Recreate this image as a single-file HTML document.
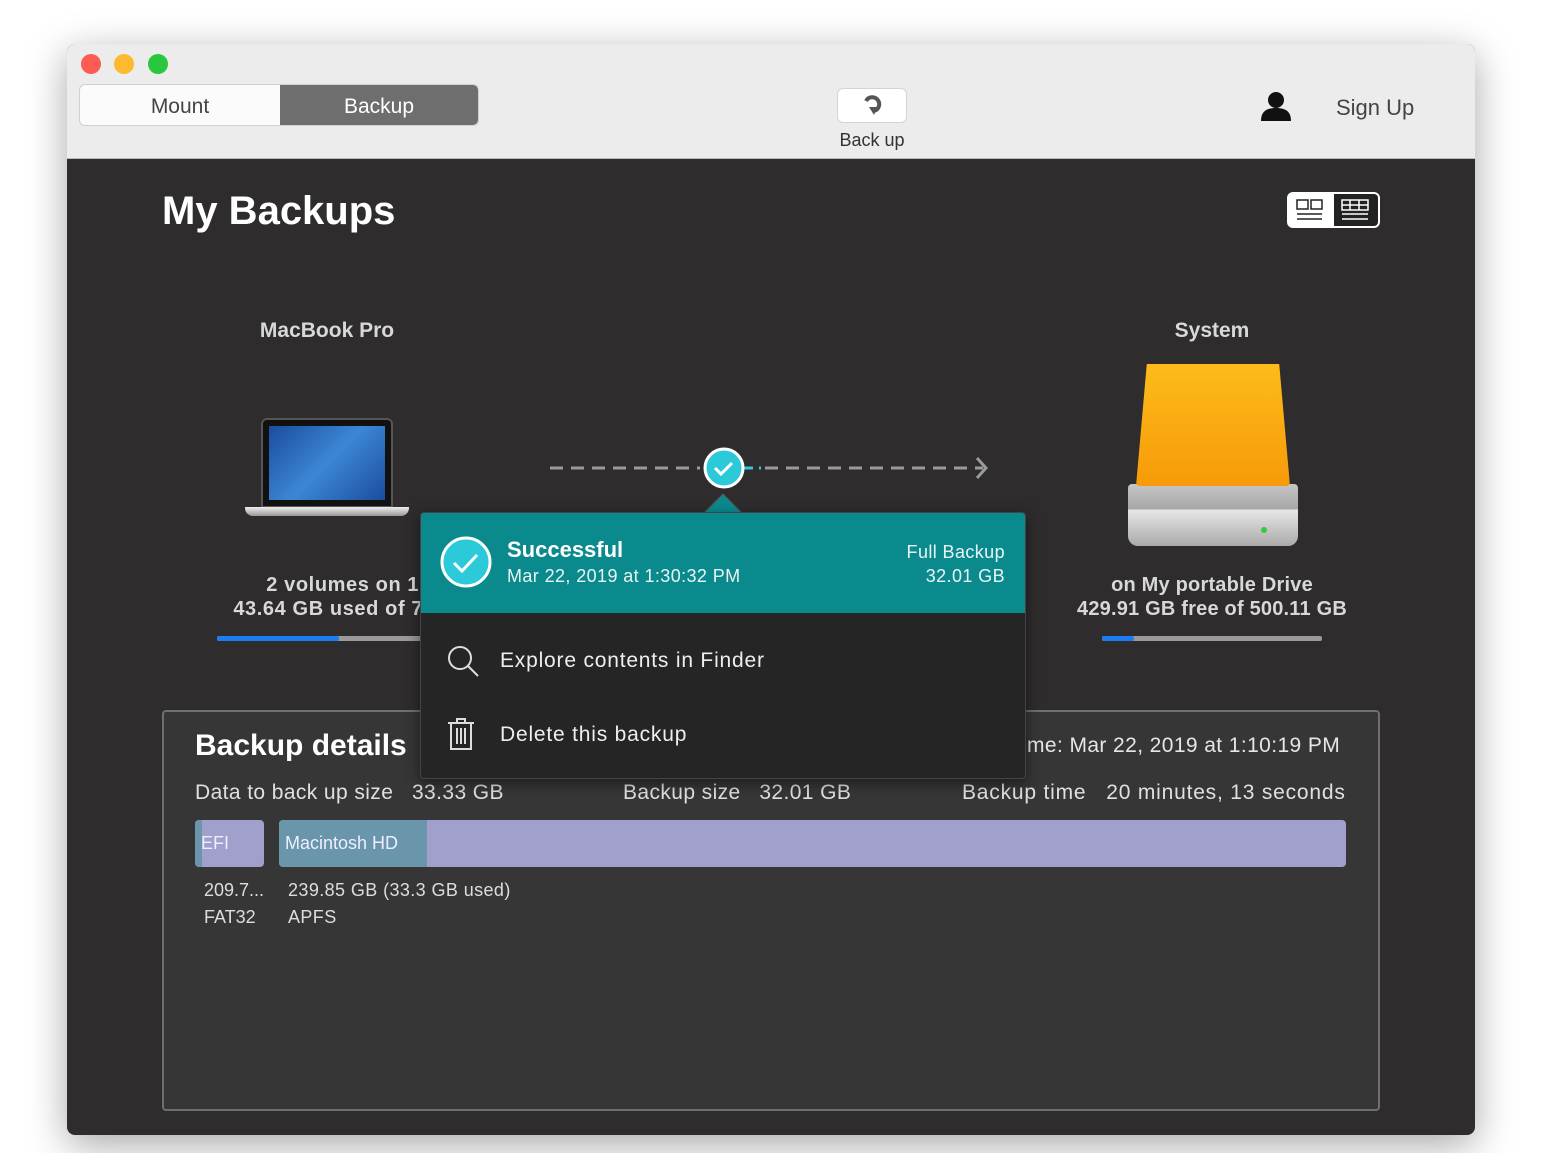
<!DOCTYPE html>
<html><head><meta charset="utf-8"><style>
*{margin:0;padding:0;box-sizing:border-box}
body{width:1544px;height:1153px;background:#fff;position:relative;overflow:hidden;font-family:"Liberation Sans",sans-serif}
.a{position:absolute;white-space:nowrap}
#win{position:absolute;left:67px;top:44px;width:1408px;height:1091px;border-radius:8px;background:#2e2c2d;box-shadow:0 10px 40px rgba(0,0,0,.35);overflow:hidden}
#tb{position:absolute;left:0;top:0;width:1408px;height:115px;background:#ececec;border-bottom:1px solid #bbb}
.dot{position:absolute;top:10px;width:20px;height:20px;border-radius:50%}
.w{color:#fff}
.g{color:#d8d8d8}
.t{letter-spacing:0.4px}
</style></head><body>
<div id="win">
 <div id="tb">
  <div class="dot" style="left:14px;background:#fd5b54"></div>
  <div class="dot" style="left:47px;background:#fdba2d"></div>
  <div class="dot" style="left:81px;background:#27c73e"></div>
  <div class="a" style="left:13px;top:41px;width:398px;height:40px;border-radius:5px;background:#fbfbfb;box-shadow:0 0 0 1px #d0d0d0"></div>
  <div class="a" style="left:213px;top:41px;width:198px;height:40px;border-radius:0 5px 5px 0;background:#6e6e6e"></div>
  <div class="a" style="left:13px;top:51px;width:200px;text-align:center;font-size:21px;color:#444">Mount</div>
  <div class="a" style="left:213px;top:51px;width:198px;text-align:center;font-size:21px;color:#fff">Backup</div>
  <div class="a" style="left:771px;top:45px;width:68px;height:33px;border-radius:5px;background:#fff;box-shadow:0 0 0 1px #d4d4d4"></div>
  <svg class="a" style="left:793px;top:49px" width="24" height="26" viewBox="0 0 24 26"><path d="M6 8a7 7 0 1 1 8 10" fill="none" stroke="#555" stroke-width="4"/><path d="M9 14l5 8 3-8z" fill="#555"/></svg>
  <div class="a" style="left:740px;top:86px;width:130px;text-align:center;font-size:18px;color:#333">Back up</div>
  <svg class="a" style="left:1192px;top:46px" width="34" height="32" viewBox="0 0 34 32"><circle cx="17" cy="10" r="8" fill="#111"/><path d="M2 31c0-10 6-13 15-13s15 3 15 13z" fill="#111"/></svg>
  <div class="a" style="left:1269px;top:51px;font-size:22px;color:#444">Sign Up</div>
 </div>
 <div class="a w" style="left:95px;top:145px;font-size:40px;font-weight:bold">My Backups</div>
 <div class="a" style="left:1220px;top:148px;width:93px;height:36px;border-radius:6px;background:#fff;border:2px solid #fff"></div>
 <div class="a" style="left:1267px;top:150px;width:44px;height:32px;background:#222;border-radius:0 4px 4px 0"></div>
 <svg class="a" style="left:1228px;top:154px" width="80" height="26"><g fill="none" stroke="#222" stroke-width="1.5"><rect x="2" y="2" width="11" height="9"/><rect x="16" y="2" width="11" height="9"/><path d="M2 16h25M2 21h25"/></g><g fill="none" stroke="#fff" stroke-width="1.5"><rect x="47" y="2" width="26" height="10"/><path d="M47 7h26M55 2v10M64 2v10M47 16h26M47 21h26"/></g></svg>

 <div class="a g" style="left:160px;top:275px;width:200px;text-align:center;font-size:21px;font-weight:bold">MacBook Pro</div>
 <div class="a" style="left:194px;top:374px;width:132px;height:90px;background:#111;border-radius:6px 6px 0 0;border:2px solid #555"></div>
 <div class="a" style="left:202px;top:382px;width:116px;height:74px;background:linear-gradient(135deg,#1a4d9c,#3c86d6 50%,#1a4d9c)"></div>
 <div class="a" style="left:178px;top:463px;width:164px;height:9px;background:linear-gradient(#eee,#999);border-radius:0 0 8px 8px"></div>
 <div class="a g" style="left:80px;top:529px;width:440px;text-align:center;font-size:20px;font-weight:bold;line-height:24px;letter-spacing:0.6px">2 volumes on 1 disk<br>43.64 GB used of 79.11 GB</div>
 <div class="a" style="left:150px;top:592px;width:210px;height:5px;background:#9a9a9a;border-radius:2px"></div>
 <div class="a" style="left:150px;top:592px;width:122px;height:5px;background:#1e7cf2;border-radius:2px"></div>

 <div class="a g" style="left:1045px;top:275px;width:200px;text-align:center;font-size:21px;font-weight:bold">System</div>
 <div class="a" style="left:1061px;top:440px;width:170px;height:62px;background:linear-gradient(#c6c6c6,#a7a7a7 40%,#e6e6e6 42%,#aaa);border-radius:4px 4px 10px 10px"></div>
 <div class="a" style="left:1069px;top:320px;width:154px;height:122px;background:linear-gradient(#fdbb1a,#f79a08);clip-path:polygon(7% 0,93% 0,100% 100%,0 100%);border-radius:4px"></div>
 <div class="a" style="left:1194px;top:483px;width:6px;height:6px;border-radius:50%;background:#3c3"></div>
 <div class="a g" style="left:975px;top:529px;width:340px;text-align:center;font-size:20px;font-weight:bold;line-height:24px;letter-spacing:0.2px">on My portable Drive<br>429.91 GB free of 500.11 GB</div>
 <div class="a" style="left:1035px;top:592px;width:220px;height:5px;background:#9a9a9a;border-radius:2px"></div>
 <div class="a" style="left:1035px;top:592px;width:32px;height:5px;background:#1e7cf2;border-radius:2px"></div>

 <svg class="a" style="left:480px;top:408px" width="450" height="34"><path d="M3 16h150" stroke="#9a9a9a" stroke-width="3" stroke-dasharray="13 8"/><path d="M196 16h18" stroke="#2cc9d9" stroke-width="3" stroke-dasharray="10 6"/><path d="M218 16h218" stroke="#9a9a9a" stroke-width="3" stroke-dasharray="13 8"/><path d="M430 6l9 10-9 10" fill="none" stroke="#9a9a9a" stroke-width="3"/></svg>
 <svg class="a" style="left:635px;top:403px" width="44" height="44"><circle cx="22" cy="21" r="19" fill="#2cc9d9" stroke="#fff" stroke-width="3"/><path d="M13 21l6 6 11-11" fill="none" stroke="#fff" stroke-width="3"/></svg>

 <div class="a" style="left:95px;top:666px;width:1218px;height:401px;background:#363636;border:2px solid #6f6f6f;border-radius:4px"></div>
 <div class="a w" style="left:128px;top:685px;font-size:30px;font-weight:bold">Backup details</div>
 <div class="a t" style="left:960px;top:690px;font-size:21px;color:#e6e6e6">me: Mar 22, 2019 at 1:10:19 PM</div>
 <div class="a t" style="left:128px;top:737px;font-size:21px;color:#e0e0e0">Data to back up size&nbsp;&nbsp; 33.33 GB</div>
 <div class="a t" style="left:556px;top:737px;font-size:21px;color:#e0e0e0">Backup size&nbsp;&nbsp; 32.01 GB</div>
 <div class="a t" style="left:895px;top:737px;font-size:21px;color:#e0e0e0;letter-spacing:0.8px">Backup time&nbsp;&nbsp; 20 minutes, 13 seconds</div>
 <div class="a" style="left:128px;top:776px;width:69px;height:47px;background:#a19fcc;border-radius:4px;overflow:hidden"><div style="width:7px;height:100%;background:#6a96ab"></div></div>
 <div class="a" style="left:134px;top:789px;font-size:18px;color:#eef">EFI</div>
 <div class="a" style="left:212px;top:776px;width:1067px;height:47px;background:#a19fcc;border-radius:4px;overflow:hidden"><div style="width:148px;height:100%;background:#6a96ab"></div></div>
 <div class="a" style="left:218px;top:789px;font-size:18px;color:#eef">Macintosh HD</div>
 <div class="a" style="left:137px;top:833px;font-size:18px;color:#ddd;line-height:27px">209.7...<br>FAT32</div>
 <div class="a t" style="left:221px;top:833px;font-size:18px;color:#ddd;line-height:27px">239.85 GB (33.3 GB used)<br>APFS</div>

 <svg class="a" style="left:636px;top:448px" width="40" height="22"><path d="M0 22L20 2 40 22z" fill="#0b8a8e" stroke="#555" stroke-width="1"/></svg>
 <div class="a" style="left:353px;top:468px;width:606px;height:267px;background:#252525;border:1px solid #444;border-radius:4px;box-shadow:0 4px 14px rgba(0,0,0,.5);overflow:hidden">
  <div style="position:absolute;left:0;top:0;width:606px;height:100px;background:#0b8a8e"></div>
 </div>
 <svg class="a" style="left:371px;top:490px" width="56" height="56"><circle cx="28" cy="28" r="24" fill="#2cc9d9" stroke="#fff" stroke-width="3"/><path d="M16 29l8 8 15-16" fill="none" stroke="#fff" stroke-width="3"/></svg>
 <div class="a w" style="left:440px;top:493px;font-size:22px;font-weight:bold">Successful</div>
 <div class="a t" style="left:440px;top:522px;font-size:18px;color:#e8f5f5">Mar 22, 2019 at 1:30:32 PM</div>
 <div class="a t" style="left:736px;top:496px;width:202px;text-align:right;font-size:18px;color:#e8f5f5;line-height:24px">Full Backup<br>32.01 GB</div>
 <svg class="a" style="left:379px;top:600px" width="36" height="36"><circle cx="14" cy="14" r="11" fill="none" stroke="#ddd" stroke-width="2"/><path d="M22 22l10 10" stroke="#ddd" stroke-width="2"/></svg>
 <div class="a" style="left:433px;top:605px;font-size:21px;color:#eee;letter-spacing:0.8px">Explore contents in Finder</div>
 <svg class="a" style="left:379px;top:672px" width="32" height="36"><g fill="none" stroke="#ddd" stroke-width="2"><path d="M2 7h26M11 7V3h8v4M5 7v26h20V7M11 12v16M15 12v16M19 12v16"/></g></svg>
 <div class="a" style="left:433px;top:679px;font-size:21px;color:#eee;letter-spacing:0.8px">Delete this backup</div>
</div>
</body></html>
